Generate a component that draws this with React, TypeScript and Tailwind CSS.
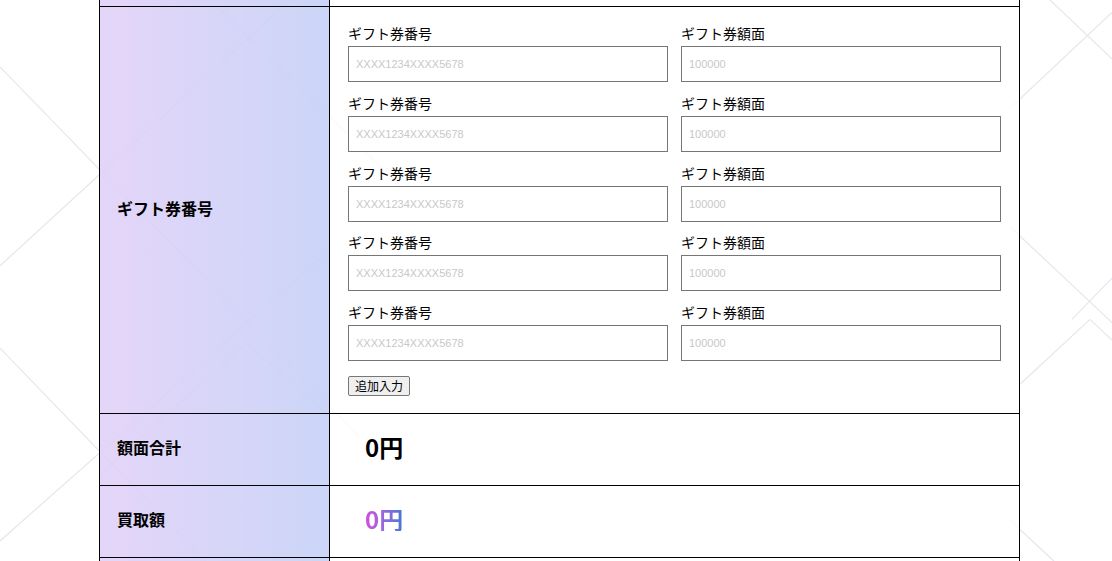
import React from 'react';

// faint diagonal lines behind the form
const bgLines: [number, number, number, number][] = [
  [0, 258, 290, 0],
  [0, 65, 360, 425],
  [210, 0, 400, 180],
  [0, 338, 222, 561],
  [0, 525, 330, 242],
  [247, 333, 100, 460],
  [247, 333, 330, 405],
  [1050, 0, 1112, 57],
  [1010, 105, 1112, 12],
  [1010, 220, 1112, 313],
  [1112, 270, 1072, 310],
  [1090, 310, 1020, 373],
  [1090, 310, 1112, 330],
  [1010, 505, 1060, 550],
];

function Field({ label, placeholder }: { label: string; placeholder: string }) {
  return (
    <div>
      <div className="text-[14px] leading-[19px] pb-[3px] text-black">{label}</div>
      <input
        type="text"
        placeholder={placeholder}
        className="block w-full h-[36px] border border-[#767676] bg-white px-[7px] text-[11px] placeholder:text-[#c8c8c8] outline-none"
        style={{ fontFamily: '"Liberation Sans", Arial, sans-serif' }}
      />
    </div>
  );
}

export default function App() {
  const rows = [0, 1, 2, 3, 4];

  return (
    <div
      className="relative w-full min-h-screen overflow-hidden bg-white text-black"
      style={{ fontFamily: '"Noto Sans CJK JP", "Noto Sans", sans-serif' }}
    >
      <svg className="absolute inset-0 w-full h-full pointer-events-none" viewBox="0 0 1112 561" preserveAspectRatio="none">
        {bgLines.map(([x1, y1, x2, y2], i) => (
          <line key={i} x1={x1} y1={y1} x2={x2} y2={y2} stroke="#e6e6ee" strokeWidth="1.2" />
        ))}
      </svg>

      <div className="relative ml-[99px] w-[921px] border-x border-black">
        {/* tail of the row above */}
        <div className="flex h-[7px] border-b border-black">
          <div className="w-[230px] shrink-0 border-r border-black bg-linear-to-r from-[#e1d1f8]/90 to-[#c5d1f7]/90" />
          <div className="flex-1 bg-white/80" />
        </div>

        {/* gift card numbers */}
        <div className="flex border-b border-black">
          <div className="w-[230px] shrink-0 border-r border-black bg-linear-to-r from-[#e1d1f8]/90 to-[#c5d1f7]/90 flex items-center pl-[17px] pb-[4px]">
            <span className="text-[16px] font-bold">ギフト券番号</span>
          </div>
          <div className="flex-1 bg-white/80 pt-[17px] px-[18px] pb-[17px]">
            <div className="grid grid-cols-2 gap-x-[13px] gap-y-[11.75px]">
              {rows.map(i => (
                <React.Fragment key={i}>
                  <Field label="ギフト券番号" placeholder="XXXX1234XXXX5678" />
                  <Field label="ギフト券額面" placeholder="100000" />
                </React.Fragment>
              ))}
            </div>
            <button className="mt-[15px] h-[20px] px-[6px] border border-[#767676] rounded-[2px] bg-[#efefef] text-[12px] leading-[18px]">
              追加入力
            </button>
          </div>
        </div>

        {/* face value total */}
        <div className="flex h-[72px] border-b border-black">
          <div className="w-[230px] shrink-0 border-r border-black bg-linear-to-r from-[#e1d1f8]/90 to-[#c5d1f7]/90 flex items-center pl-[17px] pb-[5px]">
            <span className="text-[16px] font-bold">額面合計</span>
          </div>
          <div className="flex-1 bg-white/80 flex items-center pl-[35px] pb-[6px]">
            <span className="text-[24px] font-bold leading-none">0円</span>
          </div>
        </div>

        {/* purchase price */}
        <div className="flex h-[72px] border-b border-black">
          <div className="w-[230px] shrink-0 border-r border-black bg-linear-to-r from-[#e1d1f8]/90 to-[#c5d1f7]/90 flex items-center pl-[17px] pb-[5px]">
            <span className="text-[16px] font-bold">買取額</span>
          </div>
          <div className="flex-1 bg-white/80 flex items-center pl-[35px] pb-[6px]">
            <span className="text-[24px] font-bold leading-none bg-linear-to-r from-[#d24ae0] to-[#3d78d6] bg-clip-text text-transparent">
              0円
            </span>
          </div>
        </div>

        <div className="flex h-[20px]">
          <div className="w-[230px] shrink-0 border-r border-black bg-linear-to-r from-[#e1d1f8]/90 to-[#c5d1f7]/90" />
          <div className="flex-1 bg-white/80" />
        </div>
      </div>
    </div>
  );
}
